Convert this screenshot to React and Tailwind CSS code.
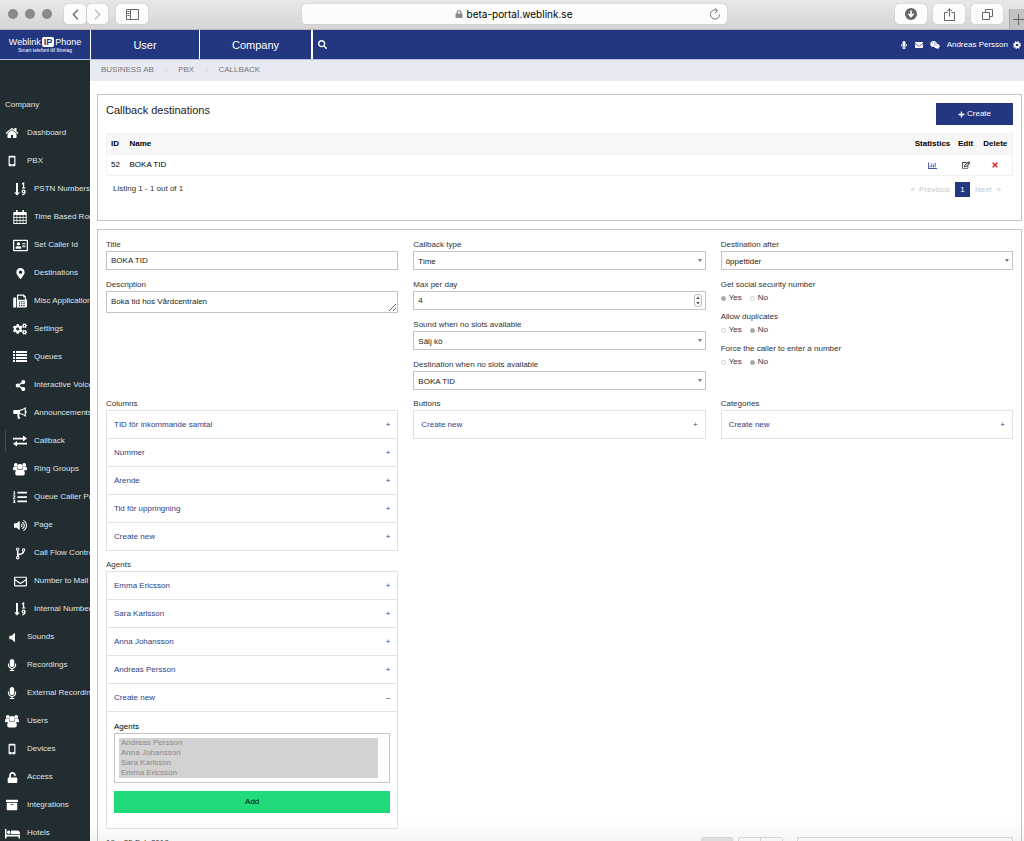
import { useState } from 'react'
import {
  FaArchive,
  FaCogs,
  FaEnvelope,
  FaListOl,
  FaLock,
  FaMapMarkerAlt,
  FaMicrophone,
  FaPlus,
  FaRegAddressCard,
  FaRegChartBar,
  FaRegEdit,
  FaRegEnvelope,
  FaSearch,
  FaShareAlt,
  FaTimes,
  FaUnlock,
  FaVolumeUp,
  FaWeixin,
} from 'react-icons/fa'

const HomeIcon = ({ size }) => (
  <svg width={size} height={size} viewBox="0 0 1792 1792" fill="currentColor">
    <path d="M1472 992v480q0 26-19 45t-45 19h-384v-384h-256v384h-384q-26 0-45-19t-19-45v-480q0-1 .5-3t.5-3l575-474 575 474q1 2 1 6zm223-69l-62 74q-8 9-21 11h-3q-13 0-21-7l-692-577-692 577q-12 8-24 7-13-2-21-11l-62-74q-8-10-7-23.5t11-21.5l719-599q32-26 76-26t76 26l244 204v-195q0-14 9-23t23-9h192q14 0 23 9t9 23v408l219 182q10 8 11 21.5t-7 23.5z" />
  </svg>
)

const MobileIcon = ({ size }) => (
  <svg width={size} height={size} viewBox="0 0 14 14" fill="currentColor" fillRule="evenodd">
    <path d="M4 1h6q1 0 1 1v10q0 1-1 1H4q-1 0-1-1V2q0-1 1-1zM4.400 3v7.500h5.200V3zM6.300 11.200v1h1.400v-1z" />
  </svg>
)

const SortIcon = ({ size }) => (
  <svg width={size} height={size} viewBox="0 0 14 14" fill="currentColor">
    <path d="M3 1h2v9.500h2L4 13.600 1 10.500h2z" />
    <path d="M9 2.200 10.600 1v5M9 6h3.300" fill="none" stroke="currentColor" strokeWidth="1.200" />
    <circle cx="10.600" cy="9.600" r="1.400" fill="none" stroke="currentColor" strokeWidth="1.200" />
    <path d="M12 9.600q0 3-2.800 3.400" fill="none" stroke="currentColor" strokeWidth="1.200" />
  </svg>
)

const CalendarIcon = ({ size }) => (
  <svg width={size} height={size} viewBox="0 0 14 14" fill="currentColor" fillRule="evenodd">
    <path d="M1 2h12q.7 0 .7.7v10.600q0 .7-.7.7H1q-.7 0-.7-.7V2.700Q.3 2 1 2zM1.300 5v2.200h2.300V5zM4.300 5v2.200h2.400V5zM7.400 5v2.200h2.300V5zM10.400 5v2.200h2.300V5zM1.300 7.900v2.200h2.300V7.900zM4.300 7.900v2.200h2.400V7.900zM7.400 7.900v2.200h2.300V7.900zM10.400 7.900v2.200h2.300V7.900zM1.300 10.800V13h2.300v-2.200zM4.300 10.800V13h2.400v-2.200zM7.400 10.800V13h2.300v-2.200zM10.400 10.800V13h2.300v-2.200z" />
    <path d="M3 0h1.600v3.400H3zM9.400 0H11v3.400H9.400z" />
  </svg>
)

const FaxIcon = ({ size }) => (
  <svg width={size} height={size} viewBox="0 0 14 14" fill="currentColor" fillRule="evenodd">
    <path d="M.8 3.500h1.700q.6 0 .6.600v8.800q0 .6-.6.600H.8q-.6 0-.6-.6V4.100q0-.6.6-.6z" />
    <path d="M4.500.5h6.300L13 2.700V5q1 .3 1 1.200v6q0 1.300-1.300 1.300H4.500q-.6 0-.6-.6V1.100q0-.6.600-.6zM5.200 1.700v4h6.600V3.300h-1.600V1.700zM6 7.300v1.100h1.200V7.300zM8.200 7.300v1.100h1.200V7.300zM10.400 7.300v1.100h1.200V7.300zM6 9.200v1.100h1.200V9.200zM8.200 9.200v1.100h1.200V9.200zM10.400 9.200v1.100h1.200V9.200zM6 11.100v1.100h1.200v-1.100zM8.200 11.100v1.100h1.200v-1.100zM10.400 11.100v1.100h1.200v-1.100z" />
  </svg>
)

const ListIcon = ({ size }) => (
  <svg width={size} height={size} viewBox="0 0 14 14" fill="currentColor">
    <path d="M0 1h2v2H0zM3 1h11v2H3zM0 4h2v2H0zM3 4h11v2H3zM0 7h2v2H0zM3 7h11v2H3zM0 10h2v2H0zM3 10h11v2H3z" />
  </svg>
)

const BullhornIcon = ({ size }) => (
  <svg width={size} height={size} viewBox="0 0 14 14" fill="currentColor" fillRule="evenodd">
    <path d="M12.800 1v3.700q1 .3 1 1.300t-1 1.300V11q-2.600-2.600-6-2.900-.9.500-.5 1.400-.5.700.3 1.400.2.600 1 1-.8 1.300-2.700.8-.7-2-.5-4.600H1.300Q.2 8 .2 7V5q0-1.100 1.100-1.100h4.500q3.800 0 7-2.900zM11.700 2.900Q9.500 4.600 7 4.900v2.200q2.600.3 4.700 2z" />
  </svg>
)

const ExchangeIcon = ({ size }) => (
  <svg width={size} height={size} viewBox="0 0 14 14" fill="currentColor">
    <path d="M0 3.700h10V1.600L14 4.600 10 7.500V5.500H0zM14 8.700H4V6.900L0 9.700l4 2.900v-2.100h10z" />
  </svg>
)

const UsersIcon = ({ size }) => (
  <svg width={size} height={size} viewBox="0 0 14 14" fill="currentColor">
    <circle cx="2.800" cy="2.900" r="1.900" />
    <circle cx="11.200" cy="2.900" r="1.900" />
    <circle cx="7" cy="4.700" r="2.700" />
    <path d="M0 7.500Q0 4.500 1.300 4.500q1.200.9 2.600.4 0 1.500.9 2.300-1.300 0-2.200 1.100H1Q0 8.300 0 7.500zM14 7.500q0-3-1.300-3-1.200.9-2.600.4 0 1.500-.9 2.300 1.300 0 2.200 1.100H13q1 0 1-.8zM4.700 7.300q2.300 1.600 4.600 0 2.500.2 2.500 4.200 0 2-1.900 2H4.100q-1.900 0-1.900-2 0-4 2.500-4.200z" />
  </svg>
)

const ForkIcon = ({ size }) => (
  <svg width={size} height={size} viewBox="0 0 14 14" fill="none" stroke="currentColor">
    <circle cx="4" cy="2.400" r="1.300" strokeWidth="1.200" />
    <circle cx="10.300" cy="3.200" r="1.300" strokeWidth="1.200" />
    <circle cx="4" cy="11.600" r="1.300" strokeWidth="1.200" />
    <path d="M4 3.700v6.600M10.300 4.500q0 2.400-3 3.100Q4 8.200 4 10" strokeWidth="1.700" />
  </svg>
)

const SpeakerIcon = ({ size }) => (
  <svg width={size} height={size} viewBox="0 0 14 14" fill="currentColor">
    <path d="M3.500 4.800h2.400L9.300 1.500q.9-.6.900.3v10.400q0 .9-.9.300L5.900 9.200H3.500q-.6 0-.6-.6V5.400q0-.6.600-.6z" />
  </svg>
)

const BedIcon = ({ size }) => (
  <svg width={size} height={size} viewBox="0 0 16 14" fill="currentColor">
    <path d="M0 2.500q0-.6.800-.6t.8.600v5.700H16v4h-1.600v-2H1.600v2H0z" />
    <circle cx="4" cy="5.700" r="1.800" />
    <path d="M6.400 7.600V4.200q0-.5.500-.5h5.700Q16 3.700 16 7v.6z" />
  </svg>
)

const GearIcon = ({ size }) => (
  <svg width={size} height={size} viewBox="0 0 14 14" fill="none" stroke="currentColor">
    <circle cx="7" cy="7" r="3.800" strokeWidth="3" />
    <circle cx="7" cy="7" r="6" strokeWidth="2" strokeDasharray="2.400 2.312" />
  </svg>
)

const menu = [
  { label: 'Dashboard', icon: HomeIcon },
  { label: 'PBX', icon: MobileIcon, size: 12 },
  { label: 'PSTN Numbers', icon: SortIcon, sub: true },
  { label: 'Time Based Routing', icon: CalendarIcon, sub: true },
  { label: 'Set Caller Id', icon: FaRegAddressCard, sub: true, size: 15 },
  { label: 'Destinations', icon: FaMapMarkerAlt, sub: true, size: 11 },
  { label: 'Misc Applications', icon: FaxIcon, sub: true },
  { label: 'Settings', icon: FaCogs, sub: true },
  { label: 'Queues', icon: ListIcon, sub: true },
  { label: 'Interactive Voice', icon: FaShareAlt, sub: true, size: 11 },
  { label: 'Announcements', icon: BullhornIcon, sub: true },
  { label: 'Callback', icon: ExchangeIcon, sub: true, active: true },
  { label: 'Ring Groups', icon: UsersIcon, sub: true },
  { label: 'Queue Caller Priority', icon: FaListOl, sub: true },
  { label: 'Page', icon: FaVolumeUp, sub: true, size: 13 },
  { label: 'Call Flow Control', icon: ForkIcon, sub: true, size: 13 },
  { label: 'Number to Mail', icon: FaRegEnvelope, sub: true, size: 13 },
  { label: 'Internal Numbers', icon: SortIcon, sub: true },
  { label: 'Sounds', icon: SpeakerIcon, size: 11 },
  { label: 'Recordings', icon: FaMicrophone, size: 12 },
  { label: 'External Recordings', icon: FaMicrophone, size: 12 },
  { label: 'Users', icon: UsersIcon },
  { label: 'Devices', icon: MobileIcon, size: 12 },
  { label: 'Access', icon: FaUnlock, size: 11 },
  { label: 'Integrations', icon: FaArchive, size: 12 },
  { label: 'Hotels', icon: BedIcon, size: 15 },
]

const columns = ['TID för inkommande samtal', 'Nummer', 'Ärende', 'Tid för uppringning', 'Create new']
const agentRows = ['Emma Ericsson', 'Sara Karlsson', 'Anna Johansson', 'Andreas Persson', 'Create new']
const agents = ['Andreas Persson', 'Anna Johansson', 'Sara Karlsson', 'Emma Ericsson']

const chromeButton =
  'flex h-5 items-center justify-center rounded bg-[#fcfcfc] text-[#666] shadow-[0_0_1px_#999]'

const BrowserBar = () => (
  <div className="flex h-[30px] shrink-0 items-start border-b border-[#b9b7b9] bg-linear-to-b from-[#e9e7e9] to-[#d6d4d6] pl-2 pt-1">
    <div className="flex h-5 items-center gap-[7px]">
      <span className="size-[10px] rounded-full bg-[#8b898b]" />
      <span className="size-[10px] rounded-full bg-[#8b898b]" />
      <span className="size-[10px] rounded-full bg-[#8b898b]" />
    </div>
    <div className="ml-3 flex gap-px">
      <button aria-label="Back" className={`${chromeButton} w-[22px]`}>
        <svg width="7" height="11" viewBox="0 0 7 11" fill="none" stroke="currentColor" strokeWidth="1.3">
          <path d="M6 .8 1.300 5.500 6 10.200" />
        </svg>
      </button>
      <button aria-label="Forward" className={`${chromeButton} w-[21px]`}>
        <svg width="7" height="11" viewBox="0 0 7 11" fill="none" stroke="#bbb" strokeWidth="1.3">
          <path d="M1 .8 5.700 5.500 1 10.200" />
        </svg>
      </button>
    </div>
    <button aria-label="Show sidebar" className={`${chromeButton} ml-2 w-8`}>
      <svg width="13" height="11" viewBox="0 0 13 11" fill="none" stroke="currentColor">
        <path d="M.5.5h12v10H.5zM4.500.5v10M1.500 2.500h2M1.500 4.500h2M1.500 6.500h2" />
      </svg>
    </button>
    <div className="ml-[154px] flex h-5 flex-1 items-center rounded bg-[#fcfcfc] px-1 shadow-[0_0_1px_#999]">
      <div className="flex flex-1 items-center justify-center gap-1 pl-3 font-['Inter',sans-serif] text-[10px] text-black">
        <FaLock size={8} color="#8a8a8a" />
        beta-portal.weblink.se
      </div>
      <button aria-label="Reload" className="pr-[2px] text-[#777]">
        <svg width="12" height="12" viewBox="0 0 12 12" fill="none" stroke="currentColor">
          <path d="M8.500 2.600A4.600 4.600 0 1 0 10.600 6.500M6 .3l2.600 2.300L6 5" />
        </svg>
      </button>
    </div>
    <div className="ml-[168px] flex gap-[6px]">
      <button aria-label="Downloads" className={`${chromeButton} w-8`}>
        <svg width="12" height="12" viewBox="0 0 12 12">
          <circle cx="6" cy="6" r="6" fill="#666" />
          <path d="M6 2.500v5.500M3.400 5.800 6 8.500l2.600-2.700" fill="none" stroke="#fff" strokeWidth="1.600" />
        </svg>
      </button>
      <button aria-label="Share" className={`${chromeButton} w-8`}>
        <svg width="11" height="13" viewBox="0 0 11 13" fill="none" stroke="currentColor">
          <path d="M3.500 4.500h-3v8h10v-8h-3M5.500 8.500V1M3 3.200 5.500.8 8 3.200" />
        </svg>
      </button>
      <button aria-label="Tabs" className={`${chromeButton} w-8`}>
        <svg width="11" height="11" viewBox="0 0 11 11" fill="none" stroke="currentColor">
          <path d="M.5 3.500h7v7h-7zM3.500 3.500v-3h7v7h-3" />
        </svg>
      </button>
    </div>
    <button
      aria-label="New tab"
      className="ml-[6px] mt-[5px] flex h-5 w-[15px] items-center justify-end overflow-hidden border-l border-[#a5a3a5] bg-[#c3c1c3] text-[#666]"
    >
      <svg width="11" height="11" viewBox="0 0 11 11" stroke="currentColor" className="shrink-0">
        <path d="M5.500 0v11M0 5.500h11" />
      </svg>
    </button>
  </div>
)

const Header = () => (
  <header className="flex h-[30px] shrink-0 items-stretch border-b border-[#b9c0e2] bg-[#233780] text-white">
    <a href="#home" className="flex w-[90px] flex-col items-center justify-center">
      <span className="flex items-center text-[9px] leading-[10px]">
        Weblink
        <span className="mx-px rounded-xs bg-white px-[2px] font-bold text-[#233780]">IP</span>
        Phone
      </span>
      <span className="text-[5px] leading-[6px]">Smart telefoni till företag</span>
    </a>
    <a href="#user" className="flex w-[109px] items-center justify-center border-l border-white text-[11px]">
      User
    </a>
    <a href="#company" className="flex w-28 items-center justify-center border-l border-white text-[11px]">
      Company
    </a>
    <button aria-label="Search" className="flex items-center border-l-2 border-white pl-[5px]">
      <FaSearch size={9} />
    </button>
    <div className="ml-auto flex items-center pr-[3px]">
      <FaMicrophone size={8} />
      <FaEnvelope size={8} className="ml-[7px]" />
      <FaWeixin size={10} className="ml-[7px]" />
      <a href="#profile" className="ml-[7px] flex items-center gap-[5px] text-[8px]">
        Andreas Persson
        <GearIcon size={8} />
      </a>
    </div>
  </header>
)

const Sidebar = () => (
  <nav className="w-[90px] shrink-0 overflow-hidden bg-[#222d32] pt-[31px] text-[#dfe3e5]">
    <div className="flex h-7 items-center pl-[5px]">Company</div>
    {menu.map(({ label, icon: Icon, sub, active, size = 14 }) => (
      <a
        key={label}
        href="#menu"
        className={`flex h-7 items-center whitespace-nowrap ${sub ? 'pl-[5px]' : ''}`}
      >
        {sub && <span className={active ? 'h-[22px] w-px shrink-0 bg-[#2d47a8]' : 'w-px shrink-0'} />}
        <span className={`flex shrink-0 justify-center text-white ${sub ? 'w-7' : 'mr-[3px] w-6'}`}>
          <Icon size={size} />
        </span>
        {label}
      </a>
    ))}
  </nav>
)

const Destinations = () => (
  <section className="border border-[#c4c4c4] px-2 pb-[23px] pt-2">
    <div className="flex items-start justify-between">
      <h1 className="text-[11px] leading-[15px] text-[#222]">Callback destinations</h1>
      <button className="flex h-[22px] w-[77px] items-center justify-center gap-[2px] bg-[#233780] text-white">
        <FaPlus size={7} />
        Create
      </button>
    </div>
    <table className="mt-2 w-full border border-[#f2f2f2] text-left text-black">
      <thead>
        <tr className="h-[21px] bg-[#f7f7f7]">
          <th className="w-5 pl-1">ID</th>
          <th className="pl-[3px]">Name</th>
          <th className="w-10 text-center">Statistics</th>
          <th className="w-[26px] text-center">Edit</th>
          <th className="w-[34px] text-center">Delete</th>
        </tr>
      </thead>
      <tbody>
        <tr className="h-[21px] border-t border-[#f2f2f2]">
          <td className="pl-1">52</td>
          <td className="pl-[3px]">BOKA TID</td>
          <td>
            <a href="#stats" aria-label="Statistics" className="flex justify-center text-[#3a4da0]">
              <FaRegChartBar size={9} />
            </a>
          </td>
          <td>
            <a href="#edit" aria-label="Edit" className="flex justify-center">
              <FaRegEdit size={8} />
            </a>
          </td>
          <td>
            <a href="#delete" aria-label="Delete" className="flex justify-center text-[#d9252a]">
              <FaTimes size={8} />
            </a>
          </td>
        </tr>
      </tbody>
    </table>
    <div className="mt-[6px] flex items-start justify-between pl-[7px] pr-3">
      <span className="leading-[14px]">Listing 1 - 1 out of 1</span>
      <div className="flex items-center gap-[5px] text-[#c8c8c8]">
        <span className="flex gap-1"><span>«</span> Previous</span>
        <a href="#page" className="flex size-[15px] items-center justify-center bg-[#233780] text-white">
          1
        </a>
        <span className="flex gap-[5px]">Next <span>»</span></span>
      </div>
    </div>
  </section>
)

const control = 'w-full border border-[#c4c4c4] bg-white px-1 text-[#222]'

const Field = ({ id, label, children }) => (
  <div className="mb-2">
    <label htmlFor={id} className="block leading-[13px]">
      {label}
    </label>
    {children}
  </div>
)

const Select = ({ id, label, value }) => (
  <Field id={id} label={label}>
    <div className="relative">
      <select id={id} defaultValue={value} className={`${control} block h-[19px] appearance-none pt-[2px]`}>
        <option>{value}</option>
      </select>
      <svg width="4" height="3" viewBox="0 0 4 3" fill="#777" className="pointer-events-none absolute right-1 top-2">
        <path d="M0 0h4L2 3z" />
      </svg>
    </div>
  </Field>
)

const YesNo = ({ name, label, value }) => (
  <fieldset className="mb-[6px]">
    <legend className="leading-[13px]">{label}</legend>
    <div className="flex h-[13px] items-center gap-2">
      {['Yes', 'No'].map((option) => (
        <label key={option} className="flex items-center gap-[3px]">
          <input
            type="radio"
            name={name}
            defaultChecked={option === value}
            className="mt-[2px] size-[5px] appearance-none rounded-full border border-[#d0d0d0] checked:border-[#aaa] checked:bg-[#aaa]"
          />
          {option}
        </label>
      ))}
    </div>
  </fieldset>
)

const Accordion = ({ title, items, openItem, children }) => {
  const [open, setOpen] = useState(openItem)

  return (
    <div className="mb-2">
      <h2>{title}</h2>
      <div className="border border-b-0 border-[#e2e2e2]">
        {items.map((item) => (
          <div key={item} className="border-b border-[#e2e2e2]">
            <button
              onClick={() => setOpen(open === item ? null : item)}
              className="flex h-[27px] w-full items-center justify-between px-[7px] text-[#2f3e86]"
            >
              {item}
              <span>{open === item ? '–' : '+'}</span>
            </button>
            {open === item && children}
          </div>
        ))}
      </div>
    </div>
  )
}

const AgentForm = () => (
  <div className="border-t border-[#e2e2e2] px-[7px] pb-[15px] pt-2">
    <label htmlFor="agents" className="block leading-[13px] text-black">
      Agents
    </label>
    <select
      id="agents"
      multiple
      defaultValue={agents}
      className="block h-[50px] w-full overflow-hidden border border-[#c4c4c4] py-1 pl-1 pr-[11px]"
    >
      {agents.map((agent) => (
        <option key={agent} className="h-[10px] min-h-0 bg-[#d2d2d2] p-0 pl-[2px] text-[8px] leading-[10px] text-[#8a8a8a]">
          {agent}
        </option>
      ))}
    </select>
    <button className="mt-2 h-[22px] w-full bg-[#21db7b] text-black">Add</button>
  </div>
)

const CallbackForm = () => (
  <section className="mt-2 flex-1 border border-[#c4c4c4] px-2 pt-2">
    <div className="grid grid-cols-3 gap-x-[15px]">
      <div>
        <Field id="title" label="Title">
          <input id="title" type="text" defaultValue="BOKA TID" className={`${control} block h-[19px]`} />
        </Field>
        <Field id="description" label="Description">
          <textarea
            id="description"
            defaultValue="Boka tid hos Vårdcentralen"
            className={`${control} block h-[22px] resize-y overflow-hidden pt-1`}
          />
        </Field>
      </div>
      <div>
        <Select id="type" label="Callback type" value="Time" />
        <Field id="max" label="Max per day">
          <div className="relative">
            <input
              id="max"
              type="number"
              defaultValue="4"
              className={`${control} block h-[19px] [appearance:textfield]`}
            />
            <svg
              width="8"
              height="13"
              viewBox="0 0 8 13"
              className="pointer-events-none absolute right-1 top-[3px]"
            >
              <rect x=".5" y=".5" width="7" height="12" rx="2.500" fill="#fff" stroke="#bbb" />
              <path d="M2.200 5 4 2.500 5.800 5zM2.200 8 4 10.500 5.800 8z" fill="#555" />
            </svg>
          </div>
        </Field>
        <Select id="sound" label="Sound when no slots available" value="Sälj kö" />
        <Select id="noslots" label="Destination when no slots available" value="BOKA TID" />
      </div>
      <div>
        <Select id="after" label="Destination after" value="öppettider" />
        <YesNo name="ssn" label="Get social security number" value="Yes" />
        <YesNo name="duplicates" label="Allow duplicates" value="No" />
        <YesNo name="force" label="Force the caller to enter a number" value="No" />
      </div>
    </div>

    <div className="grid grid-cols-3 items-start gap-x-[15px]">
      <div>
        <Accordion title="Columns" items={columns} />
        <Accordion title="Agents" items={agentRows} openItem="Create new">
          <AgentForm />
        </Accordion>
      </div>
      <Accordion title="Buttons" items={['Create new']} />
      <Accordion title="Categories" items={['Create new']} />
    </div>

    <div className="flex">
      <h2>19 – 25 Feb 2018</h2>
      <div className="ml-auto flex">
        <button className="h-5 w-8 rounded-xs border border-[#ddd] bg-[#e6e6e6] text-[#888]">today</button>
        <button aria-label="Previous week" className="ml-[5px] h-5 w-[23px] rounded-l-xs border border-[#ddd]">
          ‹
        </button>
        <button aria-label="Next week" className="h-5 w-[22px] rounded-r-xs border border-l-0 border-[#ddd]">
          ›
        </button>
      </div>
      <div className="ml-[14px] h-5 w-[216px] border border-[#ddd]" />
    </div>
  </section>
)

const App = () => (
  <div className="flex h-screen flex-col overflow-hidden bg-white font-['Liberation_Sans',Arial,sans-serif] text-[8px] leading-[12px] text-[#333]">
    <BrowserBar />
    <Header />
    <div className="flex min-h-0 flex-1">
      <Sidebar />
      <div className="relative flex min-w-0 flex-1 flex-col overflow-hidden">
        <nav className="flex h-[21px] shrink-0 items-center gap-[11px] bg-[#e8eaf3] pb-px pl-[11px] text-[#777]">
          <a href="#business">BUSINESS AB</a>
          <span className="text-[#ccc]">/</span>
          <a href="#pbx">PBX</a>
          <span className="text-[#ccc]">/</span>
          <a href="#callback">CALLBACK</a>
        </nav>
        <main className="flex flex-1 flex-col pl-[7px] pr-[2px] pt-[13px]">
          <Destinations />
          <CallbackForm />
        </main>
        <div className="pointer-events-none absolute inset-x-0 bottom-0 h-5 bg-linear-to-b from-transparent to-black/4" />
      </div>
    </div>
  </div>
)

export default App
